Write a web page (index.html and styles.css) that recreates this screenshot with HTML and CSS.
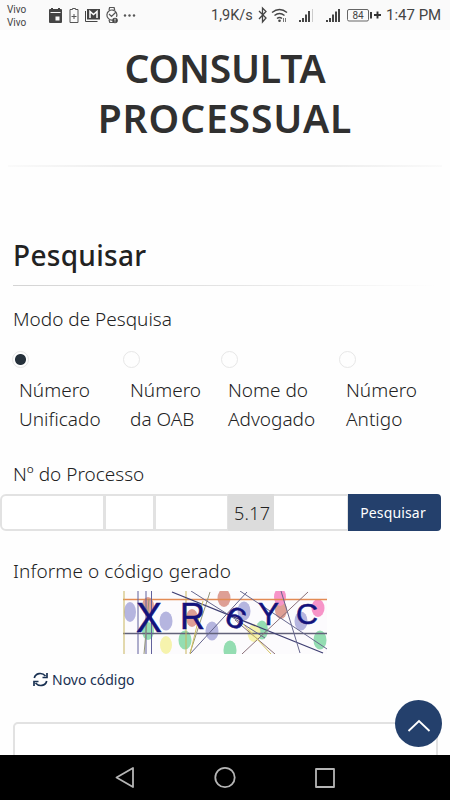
FILE: index.html
```html
<!DOCTYPE html>
<html lang="pt-BR">
  <head>
    <meta charset="UTF-8">
    <title>Consulta Processual</title>
    <link rel="stylesheet" href="styles.css">
  </head>
  <body>
    <header class="status-bar">
      <div class="carriers"><span>Vivo</span><span>Vivo</span></div>
      <svg class="notifications" width="92" height="20" viewBox="0 0 92 20">
        <path fill="#444" fill-rule="evenodd" d="M1 5q0-1 1-1h1V3h2v1h5V3h2v1h1q1 0 1 1v12q0 1-1 1H2q-1 0-1-1zM2.500 7v1h10V7zM7.500 11.500v4h4v-4z"/>
        <path fill="none" stroke="#555" d="M24.500 4.500v-1h3v1h2.500v13h-8v-13h2.500M26 9v5M23.500 11.500h5"/>
        <path fill="none" stroke="#444" d="M37.500 6v10.500h12"/>
        <path fill="#444" d="M39 4h13v10.500H39z"/>
        <path fill="none" stroke="#fff" stroke-width="1.500" d="M42 13V6.500l3.500 3 3.500-3V13"/>
        <path fill="none" stroke="#555" stroke-width="1.200" d="M61 5l.6-2.500h4.500l.6 2.500M61 15l.8 2.500h4M68.500 12a5 5 0 1 0-4 3M61 9l2.500 2.500 4-4"/>
        <circle cx="67" cy="15.500" r="2.800" fill="#444"/>
        <path stroke="#fff" d="M67 13.700v2M67 16.500v.8"/>
        <g fill="#555"><circle cx="77" cy="10.500" r="1.200"/><circle cx="81.500" cy="10.500" r="1.200"/><circle cx="86" cy="10.500" r="1.200"/></g>
      </svg>
      <span class="speed">1,9K/s</span>
      <svg class="signals" width="126" height="20" viewBox="0 0 126 20">
        <path fill="none" stroke="#444" stroke-width="1.300" d="M1 6l7 7-3.500 4V3L8 6.500 1 14"/>
        <g fill="none" stroke="#444" stroke-width="1.500"><path d="M14 7.500q7.500-6 15 0M16.500 10.500q5-4 10 0M19 13.500q2.500-2 5 0"/></g>
        <circle cx="21.500" cy="15.800" r="1.300" fill="#444"/>
        <path stroke="#777" d="M25.500 17v-4M27.500 13v4"/>
        <path stroke="#444" stroke-width="2" d="M42 17v-2M45 17v-4M48 17V9.500M51 17V6"/>
        <path stroke="#ccc" d="M54.500 17V4"/>
        <path stroke="#444" stroke-width="2" d="M69 17v-2M72 17v-4M75 17V9.500M78 17V6.500M81 17V4"/>
        <rect x="89.500" y="4.500" width="21" height="11.500" rx="1.500" fill="none" stroke="#666"/>
        <text x="100" y="14" text-anchor="middle" font-size="10" fill="#444">84</text>
        <path stroke="#333" stroke-width="1.900" d="M113 7v6.500M116 10h7M119.500 6.500v7"/>
      </svg>
      <span class="clock">1:47 PM</span>
    </header>

    <main class="content">
      <h1>CONSULTA<br><span class="second-line">PROCESSUAL</span></h1>
      <hr class="title-line">

      <h2>Pesquisar</h2>
      <hr class="section-line">

      <p class="label mode-label">Modo de Pesquisa</p>
      <div class="modes">
        <label class="mode"><input type="radio" name="modo" checked><span>Número<br>Unificado</span></label>
        <label class="mode"><input type="radio" name="modo"><span>Número<br>da OAB</span></label>
        <label class="mode"><input type="radio" name="modo"><span>Nome do<br>Advogado</span></label>
        <label class="mode"><input type="radio" name="modo"><span>Número<br>Antigo</span></label>
      </div>

      <p class="label process-label">Nº do Processo</p>
      <form class="process">
        <input type="text" class="number">
        <input type="text" class="digit">
        <input type="text" class="year">
        <span class="court">5.17</span>
        <input type="text" class="origin">
        <button type="button">Pesquisar</button>
      </form>

      <p class="label code-label">Informe o código gerado</p>
      <svg class="captcha" width="204" height="63" viewBox="0 0 204 63">
        <rect width="204" height="63" fill="#fcfbfd"/>
        <g opacity=".85">
          <g fill="#a9a9da">
            <ellipse cx="7" cy="21" rx="6" ry="10"/><ellipse cx="43" cy="30" rx="6.500" ry="9.500"/>
            <ellipse cx="89" cy="40" rx="6.500" ry="9.500"/><ellipse cx="121" cy="20" rx="6.500" ry="9.500"/>
            <ellipse cx="178" cy="30" rx="6.500" ry="9.500"/>
          </g>
          <g fill="#d99083">
            <ellipse cx="25" cy="15" rx="6" ry="9"/><ellipse cx="101" cy="7" rx="6.500" ry="9"/>
            <ellipse cx="69" cy="27" rx="6" ry="9"/><ellipse cx="158" cy="19" rx="6" ry="9"/>
          </g>
          <g fill="#83d8a5">
            <ellipse cx="25" cy="40" rx="6" ry="9"/><ellipse cx="62" cy="49" rx="6.500" ry="9.500"/>
            <ellipse cx="107" cy="59" rx="6.500" ry="9.500"/><ellipse cx="139" cy="39" rx="6" ry="9.500"/>
            <ellipse cx="197" cy="49" rx="6.500" ry="9.500"/>
          </g>
          <g fill="#f5f2a0"><ellipse cx="43" cy="54" rx="6" ry="9"/><ellipse cx="131" cy="42" rx="6.500" ry="9"/></g>
          <g fill="#f783bf"><ellipse cx="157" cy="6" rx="6" ry="9"/><ellipse cx="195" cy="17" rx="6.500" ry="9"/></g>
        </g>
        <g fill="none">
          <path stroke="#e28a54" stroke-width="1.500" d="M0 8.500h204"/>
          <path stroke="#62627a" stroke-width="1.300" d="M0 42.500h204"/>
          <path stroke="#c9b65f" d="M1 0v63M63 0v63"/>
          <path stroke="#61619c" d="M15 0v63M23 0v63M28.500 0v63"/>
          <path stroke="#949477" d="M26 8l-5 55M87 1L67 62"/>
          <path stroke="#3e3e72" stroke-width="1.300" d="M49 1l151 61"/>
          <path stroke="#66668d" d="M68 0l74 47M67 63l57-62M117 0l87 58M158 0l19 62"/>
          <path stroke="#8a7078" d="M185 1l-66 62M112 29l40 34"/>
          <path stroke="#d4c361" d="M120 33l28 30M80 10L67 63"/>
        </g>
        <g class="captcha-text">
          <text x="13" y="41" font-size="42" textLength="26" lengthAdjust="spacingAndGlyphs">X</text>
          <text x="57" y="38" font-size="37" textLength="25" lengthAdjust="spacingAndGlyphs">R</text>
          <text x="101" y="35" font-size="29" textLength="20" lengthAdjust="spacingAndGlyphs" transform="rotate(25 108 30)">6</text>
          <text x="135" y="34" font-size="31" textLength="21" lengthAdjust="spacingAndGlyphs">Y</text>
          <text x="173" y="33" font-size="30" textLength="22" lengthAdjust="spacingAndGlyphs">C</text>
        </g>
      </svg>
      <a class="new-code">
        <svg width="15" height="15" viewBox="0 0 15 15" fill="none" stroke="#193152" stroke-width="1.700">
          <path d="M1.300 6C2.500 1 9 0 12.500 4M14 1v4.500H9.500M13.700 9C12.500 14 6 15 2.500 11M1 14V9.500h4.500"/>
        </svg>
        <span>Novo código</span>
      </a>
      <input type="text" class="code-input">
      <button type="button" class="back-to-top">
        <svg width="24" height="14" viewBox="0 0 24 14" fill="none" stroke="#fff" stroke-width="1.800"><path d="M1.500 12L12 2l10.500 10"/></svg>
      </button>
    </main>

    <footer class="nav-bar">
      <svg width="22" height="24" viewBox="0 0 22 24"><path d="M19 2v19L2.500 11.500z"/></svg>
      <svg width="22" height="24" viewBox="0 0 22 24"><circle cx="11" cy="11.500" r="9.700"/></svg>
      <svg width="22" height="24" viewBox="0 0 22 24"><rect x="2" y="3" width="18" height="18"/></svg>
    </footer>
  </body>
</html>
```
FILE: styles.css
```css
* {
  box-sizing: border-box;
}

body {
  margin: 0;
  height: 800px;
  display: flex;
  flex-direction: column;
  overflow: hidden;
  background-color: #fefefe;
  color: #222;
  font-family: "Noto Sans", "Open Sans", sans-serif;
}

.status-bar {
  display: flex;
  align-items: center;
  height: 30px;
  flex: none;
  padding: 0 9px 0 7px;
  background-color: #fafafa;
  color: #444;
  font-family: Roboto, sans-serif;
  white-space: nowrap;
}

.carriers {
  display: flex;
  flex-direction: column;
  width: 41px;
  font-size: 10px;
  line-height: 13.5px;
  padding-top: 2px;
}

.speed {
  margin-left: auto;
  width: 47px;
  font-size: 14.5px;
}

.signals {
  flex: none;
}

.clock {
  width: 55px;
  margin-left: 2px;
  font-size: 15px;
}

.content {
  position: relative;
  flex: 1;
  min-height: 0;
  overflow: hidden;
  padding: 13px 13px 0;
}

h1 {
  margin: 0;
  text-align: center;
  font-size: 39px;
  line-height: 50px;
  font-weight: 600;
  letter-spacing: -0.2px;
  color: #303030;
}

.second-line {
  letter-spacing: 0.9px;
}

hr {
  border: none;
}

.title-line {
  height: 2px;
  margin: 22px -5px 69px;
  background: linear-gradient(to right, #fafafa, #eee 25%, #eee 75%, #fafafa);
}

h2 {
  margin: 0;
  font-size: 28px;
  line-height: 38px;
  font-weight: 500;
  letter-spacing: 0.3px;
}

.section-line {
  height: 1px;
  margin: 11px 0 19px;
  background: linear-gradient(to right, #d4d4d4, #e4e4e4 50%, #fefefe);
}

.label {
  margin: 0;
  font-size: 19px;
  line-height: 28px;
  font-weight: 300;
}

.modes {
  display: grid;
  grid-template-columns: 111px 98px 118px 98px;
  margin-top: 18px;
}

.mode {
  display: flex;
  flex-direction: column;
  font-size: 19px;
  line-height: 29px;
  font-weight: 300;
}

.mode span {
  margin: 8px 0 0 6px;
}

.mode input {
  appearance: none;
  width: 17px;
  height: 17px;
  margin: 0 0 0 -1px;
  border: 1px solid #e7e7e7;
  border-radius: 50%;
}

.mode input:checked {
  background: radial-gradient(circle, #26313b 5px, transparent 6px);
}

.process-label {
  margin-top: 26px;
}

.process {
  display: flex;
  height: 37px;
  margin: 6px -4px 0 -13px;
}

.process input,
.code-input {
  min-width: 0;
  background-color: #fff;
  border: 2px solid #e2e2e2;
  outline: none;
}

.process input {
  border-right-width: 1px;
}

.process .number {
  width: 104px;
  border-radius: 6px 0 0 6px;
}

.process .digit {
  width: 50px;
}

.process .year {
  width: 74px;
}

.process .origin {
  width: 74px;
  border-left: none;
}

.court {
  width: 46px;
  padding-left: 6px;
  background-color: #dcdcdc;
  font-size: 18px;
  line-height: 38px;
  font-weight: 300;
  letter-spacing: 0.3px;
}

.process button {
  width: 93px;
  padding: 0 3px 0 0;
  border: none;
  border-radius: 0 4px 4px 0;
  background-color: #24406c;
  color: #fff;
  font-family: inherit;
  font-size: 14px;
  letter-spacing: 0.15px;
}

.code-label {
  margin-top: 26px;
  letter-spacing: 0.1px;
}

.captcha {
  display: block;
  margin: 6px 0 0 110px;
}

.captcha-text {
  fill: #13127c;
  stroke: #13127c;
  stroke-width: 0.5px;
  font-family: "Liberation Sans", sans-serif;
}

.new-code {
  display: flex;
  align-items: center;
  gap: 4px;
  height: 24px;
  margin: 13px 0 0 20px;
  color: #193152;
  font-size: 14px;
}

.code-input {
  display: block;
  width: 425px;
  height: 50px;
  margin-top: 31px;
  border-radius: 5px;
}

/* floats over the form */
.back-to-top {
  position: absolute;
  right: 8px;
  bottom: 8px;
  display: flex;
  align-items: center;
  justify-content: center;
  width: 47px;
  height: 47px;
  padding: 5px 0 0;
  border: none;
  border-radius: 50%;
  background-color: #24406c;
}

.nav-bar {
  display: flex;
  justify-content: center;
  align-items: center;
  gap: 78px;
  flex: none;
  height: 45px;
  background-color: #000;
}

.nav-bar svg {
  fill: none;
  stroke: #b5b5b5;
  stroke-width: 1.8;
  stroke-linejoin: round;
}
```
